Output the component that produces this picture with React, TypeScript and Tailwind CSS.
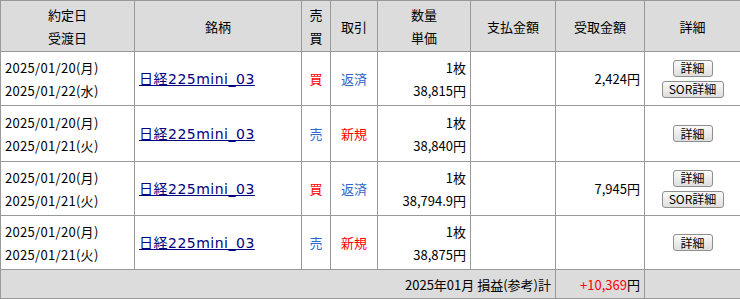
const font = { fontFamily: '"Noto Sans CJK JP", "Liberation Sans", sans-serif' };
const linkFont = { fontFamily: '"DejaVu Sans", "Noto Sans CJK JP", sans-serif' };

type Trade = {
  contract: string;
  delivery: string;
  side: '売' | '買';
  kind: '新規' | '返済';
  qty: string;
  price: string;
  received: string;
  sor: boolean;
  h: string;
};

const trades: Trade[] = [
  { contract: '2025/01/20(月)', delivery: '2025/01/22(水)', side: '買', kind: '返済', qty: '1枚', price: '38,815円', received: '2,424円', sor: true, h: 'h-[54px]' },
  { contract: '2025/01/20(月)', delivery: '2025/01/21(火)', side: '売', kind: '新規', qty: '1枚', price: '38,840円', received: '', sor: false, h: 'h-[56px]' },
  { contract: '2025/01/20(月)', delivery: '2025/01/21(火)', side: '買', kind: '返済', qty: '1枚', price: '38,794.9円', received: '7,945円', sor: true, h: 'h-[54px]' },
  { contract: '2025/01/20(月)', delivery: '2025/01/21(火)', side: '売', kind: '新規', qty: '1枚', price: '38,875円', received: '', sor: false, h: 'h-[54px]' },
];

function Btn({ label, w }: { label: string; w: string }) {
  return (
    <button
      className={`${w} h-[17px] mx-auto flex items-center justify-center rounded-[3px] border border-[#8f8f8f] bg-gradient-to-b from-[#fbfbfb] to-[#dedede] text-[12px] leading-none text-black`}
    >
      {label}
    </button>
  );
}

const th = 'border border-[#999999] bg-[#dcdcdc] font-normal text-center align-middle leading-[23px]';
const td = 'border border-[#999999] align-middle leading-[23px] px-[4px]';

export default function App() {
  return (
    <div className="w-[740px] h-[299px] bg-white text-[13px] text-black" style={font}>
      <table className="w-[740px] table-fixed border-collapse">
        <colgroup>
          <col className="w-[134px]" />
          <col className="w-[167px]" />
          <col className="w-[29px]" />
          <col className="w-[47px]" />
          <col className="w-[93px]" />
          <col className="w-[85px]" />
          <col className="w-[89px]" />
          <col className="w-[96px]" />
        </colgroup>
        <thead>
          <tr className="h-[51px]">
            <th className={th}>約定日<br />受渡日</th>
            <th className={th}>銘柄</th>
            <th className={th}>売<br />買</th>
            <th className={th}>取引</th>
            <th className={th}>数量<br />単価</th>
            <th className={th}>支払金額</th>
            <th className={th}>受取金額</th>
            <th className={th}>詳細</th>
          </tr>
        </thead>
        <tbody>
          {trades.map((t, i) => (
            <tr key={i} className={t.h}>
              <td className={`${td} tracking-[0.3px] whitespace-nowrap`}>{t.contract}<br />{t.delivery}</td>
              <td className={td}>
                <a href="#" className="text-[14px] tracking-[0.5px] text-[#000080] underline" style={linkFont}>
                  日経225mini_03
                </a>
              </td>
              <td className={`${td} text-center ${t.side === '買' ? 'text-[#ff0000]' : 'text-[#3366cc]'}`}>{t.side}</td>
              <td className={`${td} text-center ${t.kind === '新規' ? 'text-[#ff0000]' : 'text-[#3366cc]'}`}>{t.kind}</td>
              <td className={`${td} text-right whitespace-nowrap`}>{t.qty}<br />{t.price}</td>
              <td className={td}></td>
              <td className={`${td} text-right`}>{t.received}</td>
              <td className={`${td} text-center`}>
                <div className="flex flex-col gap-[4px]">
                  <Btn label="詳細" w="w-[40px]" />
                  {t.sor && <Btn label="SOR詳細" w="w-[62px]" />}
                </div>
              </td>
            </tr>
          ))}
          <tr className="h-[29px] bg-[#dcdcdc]">
            <td colSpan={6} className={`${td} text-right`}>2025年01月 損益(参考)計</td>
            <td className={`${td} text-right`}>
              <span className="text-[#ff0000]">+10,369</span>円
            </td>
            <td className={td}></td>
          </tr>
        </tbody>
      </table>
    </div>
  );
}
